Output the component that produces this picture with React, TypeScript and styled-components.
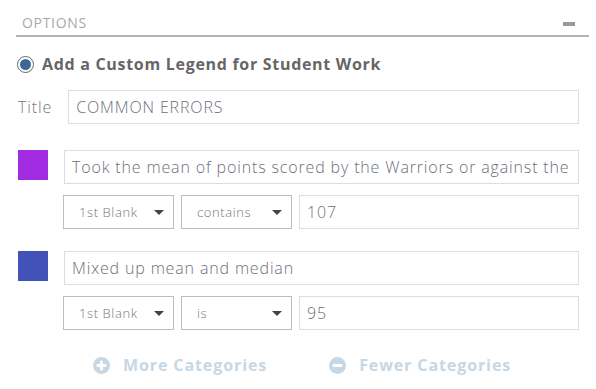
import * as React from 'react'
import styled, { createGlobalStyle } from 'styled-components'

const GlobalStyle = createGlobalStyle`
  body {
    margin: 0;
    background: #fff;
    font-family: "Open Sans", "Liberation Sans", sans-serif;
  }
`

const Panel = styled.div`
  width: 596px;
  padding: 0 7px 0 16px;
  box-sizing: border-box;
`

const Header = styled.div`
  display: flex;
  align-items: center;
  justify-content: space-between;
  height: 37px;
  padding: 0 14px 0 6px;
  border-bottom: 2px solid #b3b3b3;
  box-sizing: border-box;
`

const HeaderTitle = styled.span`
  font-size: 14px;
  letter-spacing: 0.7px;
  color: #a9a9a9;
  padding-top: 9px;
`

const Collapse = styled.span`
  width: 12px;
  height: 4px;
  background: #999;
  margin-top: 12px;
`

const Body = styled.div`
  padding: 0 10px 0 1px;
`

const RadioRow = styled.label`
  display: flex;
  align-items: center;
  gap: 8px;
  height: 52px;
  padding-top: 2px;
  box-sizing: border-box;
`

const Radio = styled.span`
  width: 17px;
  height: 17px;
  border-radius: 50%;
  border: 1px solid #666;
  box-sizing: border-box;
  display: flex;
  align-items: center;
  justify-content: center;
  &::after {
    content: '';
    width: 11px;
    height: 11px;
    border-radius: 50%;
    background: #3c6897;
  }
`

const RadioLabel = styled.span`
  font-size: 16px;
  font-weight: 700;
  letter-spacing: 0.7px;
  color: #666;
`

const TitleRow = styled.div`
  display: flex;
  align-items: center;
  gap: 16px;
  padding-left: 1px;
  margin-top: 1px;
`

const Label = styled.span`
  font-size: 16px;
  color: #777;
  font-weight: 300;
  letter-spacing: 0.9px;
`

const TextBox = styled.div`
  flex: 1;
  height: 34px;
  border: 1px solid #ddd;
  box-sizing: border-box;
  display: flex;
  align-items: center;
  padding: 0 7px;
  font-size: 16px;
  font-weight: 300;
  letter-spacing: 0.85px;
  color: #6e6e7a;
  white-space: nowrap;
  overflow: hidden;
`

const Category = styled.div`
  display: grid;
  grid-template-columns: 30px 1fr;
  column-gap: 16px;
  row-gap: 11px;
  margin-top: 26px;
  padding-left: 1px;
  & + & {
    margin-top: 22px;
  }
`

const Swatch = styled.span<{ $color: string }>`
  width: 30px;
  height: 30px;
  background: ${({ $color }) => $color};
`

const RuleRow = styled.div`
  grid-column: 2;
  display: flex;
  gap: 7px;
  margin-left: -1px;
`

const Select = styled.div`
  width: 111px;
  height: 34px;
  border: 1px solid #bdbdbd;
  box-sizing: border-box;
  display: flex;
  align-items: center;
  justify-content: space-between;
  padding: 0 9px 0 15px;
  font-size: 13px;
  font-weight: 300;
  letter-spacing: 0.6px;
  color: #777;
  &::after {
    content: '';
    border-left: 5px solid transparent;
    border-right: 5px solid transparent;
    border-top: 5px solid #444;
  }
`

const Actions = styled.div`
  display: flex;
  gap: 62px;
  padding-left: 76px;
  margin-top: 24px;
`

const Action = styled.button`
  display: flex;
  align-items: center;
  gap: 13px;
  border: none;
  background: none;
  padding: 0;
  font-family: inherit;
  font-size: 16px;
  font-weight: 700;
  letter-spacing: 0.9px;
  color: #c6d7e6;
`

const CircleIcon = ({ plus }: { plus?: boolean }) => (
  <svg width="17" height="17" viewBox="0 0 16 16">
    <circle cx="8" cy="8" r="8" fill="#c6d7e6" />
    <rect x="3.5" y="6.6" width="9" height="2.8" fill="#fff" />
    {plus && <rect x="6.6" y="3.5" width="2.8" height="9" fill="#fff" />}
  </svg>
)

const categories = [
  { color: '#a12be0', text: 'Took the mean of points scored by the Warriors or against the', op: 'contains', value: '107' },
  { color: '#4352b8', text: 'Mixed up mean and median', op: 'is', value: '95' },
]

export default function App() {
  return (
    <Panel>
      <GlobalStyle />
      <Header>
        <HeaderTitle>OPTIONS</HeaderTitle>
        <Collapse />
      </Header>
      <Body>
        <RadioRow>
          <Radio />
          <RadioLabel>Add a Custom Legend for Student Work</RadioLabel>
        </RadioRow>
        <TitleRow>
          <Label>Title</Label>
          <TextBox>COMMON ERRORS</TextBox>
        </TitleRow>
        {categories.map((c) => (
          <Category key={c.text}>
            <Swatch $color={c.color} />
            <TextBox>{c.text}</TextBox>
            <RuleRow>
              <Select>1st Blank</Select>
              <Select>{c.op}</Select>
              <TextBox>{c.value}</TextBox>
            </RuleRow>
          </Category>
        ))}
        <Actions>
          <Action>
            <CircleIcon plus />
            More Categories
          </Action>
          <Action>
            <CircleIcon />
            Fewer Categories
          </Action>
        </Actions>
      </Body>
    </Panel>
  )
}
